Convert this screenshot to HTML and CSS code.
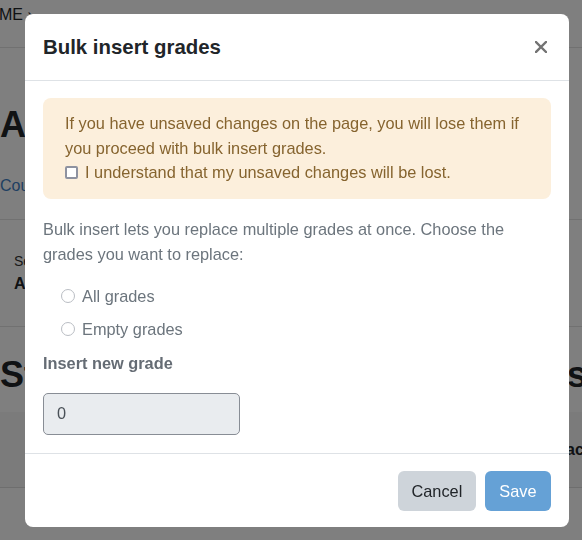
FILE: index.html
```html
<!DOCTYPE html>
<html lang="en">
<head>
<meta charset="utf-8">
<title>Bulk insert grades</title>
<link rel="stylesheet" href="styles.css">
</head>
<body>
<div class="page">
  <div class="topnav"><span class="crumb">HOME ›</span></div>
  <div class="page-head">
    <h1 class="page-title">Activity grades</h1>
    <a class="course-link" href="#">Course overview</a>
  </div>
  <div class="meta">
    <div class="meta-label">Section</div>
    <div class="meta-value">A</div>
  </div>
  <div class="section-row">
    <h2 class="section-title">Students</h2>
    <h2 class="section-title">Discussion</h2>
  </div>
  <div class="table-head">
    <span class="th-left"></span>
    <span class="th-right">Feedback</span>
  </div>
</div>

<div class="backdrop"></div>

<div class="modal" role="dialog">
  <div class="modal-header">
    <h3 class="modal-title">Bulk insert grades</h3>
    <button class="close-btn" aria-label="Close">
      <svg width="12" height="12" viewBox="0 0 12 12"><path d="M1 1 L11 11 M11 1 L1 11" stroke="currentColor" stroke-width="2.4" stroke-linecap="square"/></svg>
    </button>
  </div>
  <div class="modal-body">
    <div class="alert">
      <p class="alert-text">If you have unsaved changes on the page, you will lose them if you proceed with bulk insert grades.</p>
      <label class="check-row"><span class="checkbox"></span>I understand that my unsaved changes will be lost.</label>
    </div>
    <p class="intro">Bulk insert lets you replace multiple grades at once. Choose the grades you want to replace:</p>
    <div class="radio-list">
      <label class="radio-row"><span class="radio"></span>All grades</label>
      <label class="radio-row"><span class="radio"></span>Empty grades</label>
    </div>
    <div class="field-label">Insert new grade</div>
    <div class="grade-input">0</div>
  </div>
  <div class="modal-footer">
    <button class="btn btn-cancel">Cancel</button>
    <button class="btn btn-save">Save</button>
  </div>
</div>
</body>
</html>
```

FILE: styles.css
```css
html, body {
  margin: 0;
  padding: 0;
}
body {
  font-family: "Liberation Sans", Arial, sans-serif;
  color: #212529;
  background: #ffffff;
  width: 582px;
  height: 540px;
  overflow: hidden;
}

/* background page */
.page {
  width: 582px;
}
.topnav {
  height: 48px;
  border-bottom: 1px solid #e2e2e2;
  box-sizing: border-box;
}
.crumb {
  display: inline-block;
  margin-left: -25px;
  margin-top: 3px;
  font-size: 16px;
  line-height: 24px;
  color: #212529;
}
.page-head {
  padding: 55px 0 21px 0;
  border-bottom: 1px solid #e2e2e2;
}
.page-title {
  margin: 0;
  font-size: 36px;
  line-height: 43px;
  font-weight: 700;
  color: #212529;
}
.course-link {
  display: block;
  margin-top: 28px;
  font-size: 16px;
  line-height: 24px;
  color: #3f7ec4;
  text-decoration: none;
}
.meta {
  padding: 31px 0 30px 14px;
  border-bottom: 1px solid #e2e2e2;
}
.meta-label {
  font-size: 14px;
  line-height: 20px;
  color: #333;
}
.meta-value {
  margin-top: 1px;
  font-size: 16px;
  line-height: 24px;
  font-weight: 700;
}
.section-row {
  display: grid;
  grid-template-columns: 531px 1fr;
  padding-top: 26px;
}
.section-title {
  margin: 0;
  font-size: 36px;
  line-height: 43px;
  font-weight: 700;
  white-space: nowrap;
  overflow: hidden;
}
.table-head {
  display: grid;
  grid-template-columns: 519px 1fr;
  margin-top: 16px;
  height: 76px;
  background: #f6f6f6;
  border-bottom: 1px solid #dcdcdc;
  box-sizing: border-box;
  align-items: end;
  padding-bottom: 25px;
  font-size: 16px;
  line-height: 24px;
  font-weight: 700;
  white-space: nowrap;
}
.th-right { overflow: hidden; }

/* backdrop + modal */
.backdrop {
  position: fixed;
  inset: 0;
  background: rgba(0, 0, 0, 0.5);
}
.modal {
  position: fixed;
  left: 25px;
  top: 14px;
  width: 544px;
  height: 513px;
  background: #ffffff;
  border-radius: 8px;
  display: flex;
  flex-direction: column;
  box-sizing: border-box;
  font-size: 16.33px;
}
.modal-header {
  height: 67px;
  box-sizing: border-box;
  border-bottom: 1px solid #dee2e6;
  display: flex;
  align-items: center;
  justify-content: space-between;
  padding: 0 22px 1px 18px;
}
.modal-title {
  margin: 0;
  font-size: 20.4px;
  line-height: 24px;
  font-weight: 700;
  color: #212529;
}
.close-btn {
  border: 0;
  background: none;
  padding: 0;
  width: 12px;
  height: 12px;
  color: #737373;
  display: flex;
}
.modal-body {
  flex: 1;
  padding: 17px 18px 0 18px;
}
.alert {
  background: #fcefdc;
  border-radius: 8px;
  padding: 13px 22px 14px 22px;
  color: #86642f;
  line-height: 24.5px;
}
.alert-text {
  margin: 0;
}
.check-row {
  display: flex;
  align-items: center;
  gap: 7px;
}
.checkbox {
  width: 13px;
  height: 13px;
  box-sizing: border-box;
  border: 2px solid #8e92a0;
  border-radius: 2px;
  background: #ffffff;
  flex: none;
}
.intro {
  margin: 18px 0 0 0;
  line-height: 25px;
  color: #6c757d;
}
.radio-list {
  margin-top: 17px;
  padding-left: 18px;
  display: flex;
  flex-direction: column;
  gap: 9px;
}
.radio-row {
  display: flex;
  align-items: center;
  gap: 7px;
  line-height: 24px;
  color: #6c757d;
}
.radio {
  width: 14px;
  height: 14px;
  box-sizing: border-box;
  border: 1.5px solid #b9bdc3;
  border-radius: 50%;
  background: #fff;
  flex: none;
}
.field-label {
  margin-top: 10px;
  line-height: 24px;
  font-weight: 700;
  color: #656c74;
}
.grade-input {
  margin-top: 18px;
  width: 197px;
  height: 42px;
  box-sizing: border-box;
  background: #e9ecef;
  border: 1px solid #888d95;
  border-radius: 5px;
  padding: 0 13px;
  display: flex;
  align-items: center;
  color: #495057;
}
.modal-footer {
  border-top: 1px solid #dee2e6;
  padding: 17px 18px 16px 18px;
  display: flex;
  justify-content: flex-end;
  gap: 9px;
}
.btn {
  height: 40px;
  border: 0;
  border-radius: 6px;
  font-family: "Liberation Sans", Arial, sans-serif;
  font-size: 16.33px;
  padding: 0 13.5px;
}
.btn-cancel {
  background: #ced4da;
  color: #212529;
}
.btn-save {
  background: #65a1d6;
  color: #ffffff;
  padding: 0 14.5px;
}
```
